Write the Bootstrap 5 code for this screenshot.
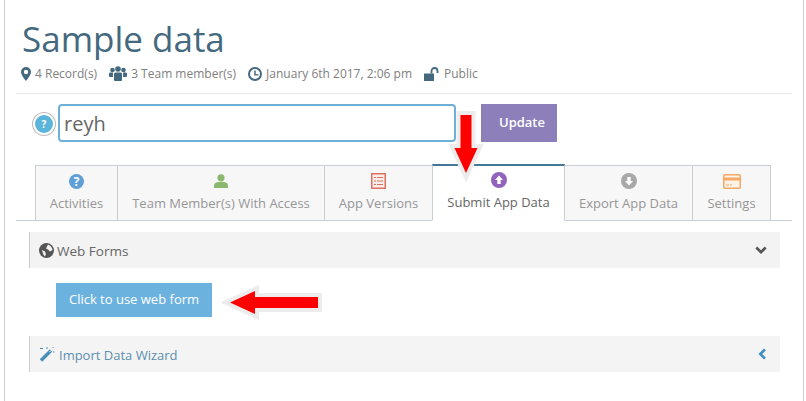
<!DOCTYPE html>
<html lang="en">
<head>
<meta charset="utf-8">
<title>Sample data</title>
<link href="https://cdn.jsdelivr.net/npm/bootstrap@5.3.0/dist/css/bootstrap.min.css" rel="stylesheet">
<style>
html,body{height:401px;overflow:hidden;background:#fff}
body{font-family:"Open Sans",sans-serif;color:#777;font-size:13px}
.frame{width:800px;height:401px;margin-left:4px;border-left:1px solid #ccc;border-right:1px solid #ccc;padding:0 11px 0 11px}
.ttl{font-size:35px;font-weight:400;line-height:49px;color:#44697f;margin:0;padding:14px 0 0 6px}
.meta{font-size:12px;line-height:16px;color:#808080;padding:3px 0 11px 5px;border-bottom:1px solid #e8e8e8;gap:12px}
.meta svg{fill:#44697f;display:block}
.meta span{gap:4px}
.formrow{padding:10px 0 0 16px;height:71px}
.help{width:22px;height:22px;margin:9px 2px 0 1px;border-radius:50%;background:#5bb5d9;border:2px solid #fff;box-shadow:0 0 0 1px #bbb;color:#fff;font-size:10px;font-weight:700;line-height:18px;text-align:center;flex:none}
.nameinput{width:398px;height:38px;border:2px solid #6fb0d8;border-radius:4px;font-size:20px;color:#666;padding:0 4px;font-family:"Open Sans",sans-serif;outline:0;background:#fff;margin-left:1px}
.upd{width:76px;height:38px;margin-left:25px;background:#8c7fba;color:#fff;border:0;border-radius:0;font-size:13px;font-weight:600;padding:0 0 0 6px}
.tabstrip{border-bottom:1px solid #c8ced4;padding-left:19px;height:56px;margin-bottom:11px;align-items:flex-end}
.tabi{height:56px;margin-bottom:-1px;background:#f7f7f8;border:1px solid #c8ced4;border-left-width:0;color:#969696;text-align:center;font-size:13px;line-height:18px;padding-top:7px}
.tabi:first-child{border-left-width:1px}
.tabglyph{height:16px;margin-bottom:5px;align-items:center;justify-content:center}
.tabi.on{background:#fff;color:#666;border-top:2px solid #44789a;border-bottom-color:#fff;border-left-width:1px;margin-left:-1px;height:57px;padding-top:6px}
.secbar{margin-left:13px;width:751px;height:36px;background:#f3f3f3;border-left:1px solid #ccc;padding:0 13px 0 9px;font-size:13.5px;color:#666;gap:3px}
.secbar svg{display:block}
.secbar.linkbar{color:#5b8fae;font-size:13px;background:#f4f4f4;gap:4px}
.secbar .grow{flex:1;padding-top:3px}
.webbtn{margin:15px 0 19px 40px;width:156px;height:34px;background:#6cb2df;color:#fff;border:0;border-radius:0;font-size:13px;font-weight:500;padding:0;display:block}
.webbtn:hover,.upd:hover{color:#fff}
.arrow{position:absolute;overflow:visible}
.arrow path{fill:#f00;stroke:#ececec;stroke-width:8;paint-order:stroke}
</style>
</head>
<body>
<div class="frame position-relative">
  <h1 class="ttl">Sample data</h1>
  <div class="meta d-flex align-items-center">
    <span class="d-flex align-items-center"><svg width="10" height="14" viewBox="0 0 10 14"><path fill-rule="evenodd" d="M5 0a5 5 0 0 1 5 5c0 2.500-3 6.500-5 9-2-2.500-5-6.500-5-9a5 5 0 0 1 5-5zm0 2.800a2.200 2.200 0 1 0 0 4.400 2.200 2.200 0 0 0 0-4.400z"/></svg>4 Record(s)</span>
    <span class="d-flex align-items-center"><svg width="18" height="16" viewBox="0 0 18 16"><circle cx="3.500" cy="4" r="2.300"/><circle cx="14.500" cy="4" r="2.300"/><circle cx="9" cy="3" r="2.800"/><path d="M0 7.500Q0 6.500 1.500 6.500H4Q3.800 9 4 11H1Q0 11 0 10zM18 7.500Q18 6.500 16.500 6.500H14Q14.200 9 14 11H17Q18 11 18 10zM5 8Q5 6.500 6.500 6.500H11.500Q13 6.500 13 8V14Q13 15 12 15H6Q5 15 5 14z"/></svg>3 Team member(s)</span>
    <span class="d-flex align-items-center"><svg width="14" height="14" viewBox="0 0 14 14"><path fill-rule="evenodd" d="M7 0a7 7 0 1 1 0 14A7 7 0 0 1 7 0zm0 2a5 5 0 1 0 0 10A5 5 0 0 0 7 2zM6.200 3.500h1.500v3.700h2.800v1.400H6.200z"/></svg>January 6th 2017, 2:06 pm</span>
    <span class="d-flex align-items-center"><svg width="16" height="14" viewBox="0 0 16 14"><path d="M0 6.500h10V14H0z"/><path d="M7.500 6.500V4a3 3 0 0 1 6 0v2" fill="none" stroke="#44697f" stroke-width="1.800"/></svg>Public</span>
  </div>
  <div class="formrow d-flex align-items-start">
    <div class="help">?</div>
    <input class="nameinput" type="text" value="reyh" aria-label="Name">
    <button class="btn upd" type="button">Update</button>
  </div>
  <div class="tabstrip d-flex">
    <div class="tabi" style="width:83px"><div class="tabglyph d-flex"><svg width="15" height="15" viewBox="0 0 14 14"><circle cx="7" cy="7" r="7" fill="#5f9fd8"/><text x="7" y="11" text-anchor="middle" font-size="11" font-weight="700" font-family="Open Sans" fill="#fff">?</text></svg></div>Activities</div>
    <div class="tabi" style="width:207px"><div class="tabglyph d-flex"><svg width="14" height="14" viewBox="0 0 14 14" fill="#8ab86e"><circle cx="7" cy="3.800" r="3.600"/><path d="M0 14V11.500Q0 8.500 4 8H10Q14 8.500 14 11.500V14z"/></svg></div>Team Member(s) With Access</div>
    <div class="tabi" style="width:108px"><div class="tabglyph d-flex"><svg width="15" height="16" viewBox="0 0 15 16"><rect x=".75" y=".75" width="13.500" height="14.500" fill="#fbeeea" stroke="#dc7160" stroke-width="1.500"/><path d="M3 4.500h2M6 4.500h6M3 8h2M6 8h6M3 11.500h2M6 11.500h6" stroke="#dc7160" stroke-width="1"/></svg></div>App Versions</div>
    <div class="tabi on" style="width:133px"><div class="tabglyph d-flex"><svg width="16" height="16" viewBox="0 0 16 16"><circle cx="8" cy="8" r="8" fill="#9262bd"/><path d="M8 3.500L12 8H9.700V12H6.300V8H4z" fill="#fff"/></svg></div>Submit App Data</div>
    <div class="tabi" style="width:128px"><div class="tabglyph d-flex"><svg width="16" height="16" viewBox="0 0 16 16"><circle cx="8" cy="8" r="8" fill="#a8a8a8"/><path d="M8 12.500L12 8H9.700V4H6.300V8H4z" fill="#fff"/></svg></div>Export App Data</div>
    <div class="tabi" style="width:78px"><div class="tabglyph d-flex"><svg width="18" height="15" viewBox="0 0 18 15"><rect x=".75" y=".75" width="16.500" height="13.500" rx="1" fill="#fdf2e6" stroke="#f5a965" stroke-width="1.500"/><path d="M1 5h16" stroke="#f5a965" stroke-width="3"/><path d="M3 11h3M7 11h2" stroke="#f5a965"/></svg></div>Settings</div>
  </div>
  <div class="secbar d-flex align-items-center">
    <svg width="15" height="15" viewBox="0 0 15 15"><circle cx="7.500" cy="7.500" r="7.500" fill="#555"/><path d="M9 1.500Q13 3 13.500 7L11 8.500 9 6.500 7 5.500zM3 7l3 1.500 1 3-1.500 2L4 10.500z" fill="#f3f3f3"/></svg>
    <span class="grow">Web Forms</span>
    <svg width="12" height="9" viewBox="0 0 12 9"><path d="M1.300 1.500L6 6.200 10.700 1.500" fill="none" stroke="#555" stroke-width="2.600"/></svg>
  </div>
  <button class="btn webbtn" type="button">Click to use web form</button>
  <div class="secbar linkbar d-flex align-items-center">
    <svg width="16" height="16" viewBox="0 0 16 16"><path d="M2 14.500L12 4.500" stroke="#4a8fb8" stroke-width="3.400"/><path d="M10.500 6L12 4.500" stroke="#fff" stroke-width="1"/><path d="M1 2.500h3M8 1v2M13.500 1l1 1M14 6h1.500" stroke="#4a8fb8" stroke-width="1"/></svg>
    <span class="grow">Import Data Wizard</span>
    <svg width="9" height="12" viewBox="0 0 9 12"><path d="M7 1.300L2.300 6 7 10.700" fill="none" stroke="#3d8fc4" stroke-width="2.600"/></svg>
  </div>
  <svg class="arrow" style="left:443px;top:113px" width="36" height="64" viewBox="0 0 36 64"><path d="M12.500 2H23.500V35H29.500L18 60 6.500 35H12.500z"/></svg>
  <svg class="arrow" style="left:222px;top:286px" width="96" height="33" viewBox="0 0 96 33"><path d="M91 11V22H28V28L3 16.500 28 5V11z"/></svg>
</div>
<script src="https://cdn.jsdelivr.net/npm/bootstrap@5.3.0/dist/js/bootstrap.bundle.min.js"></script>
</body>
</html>
